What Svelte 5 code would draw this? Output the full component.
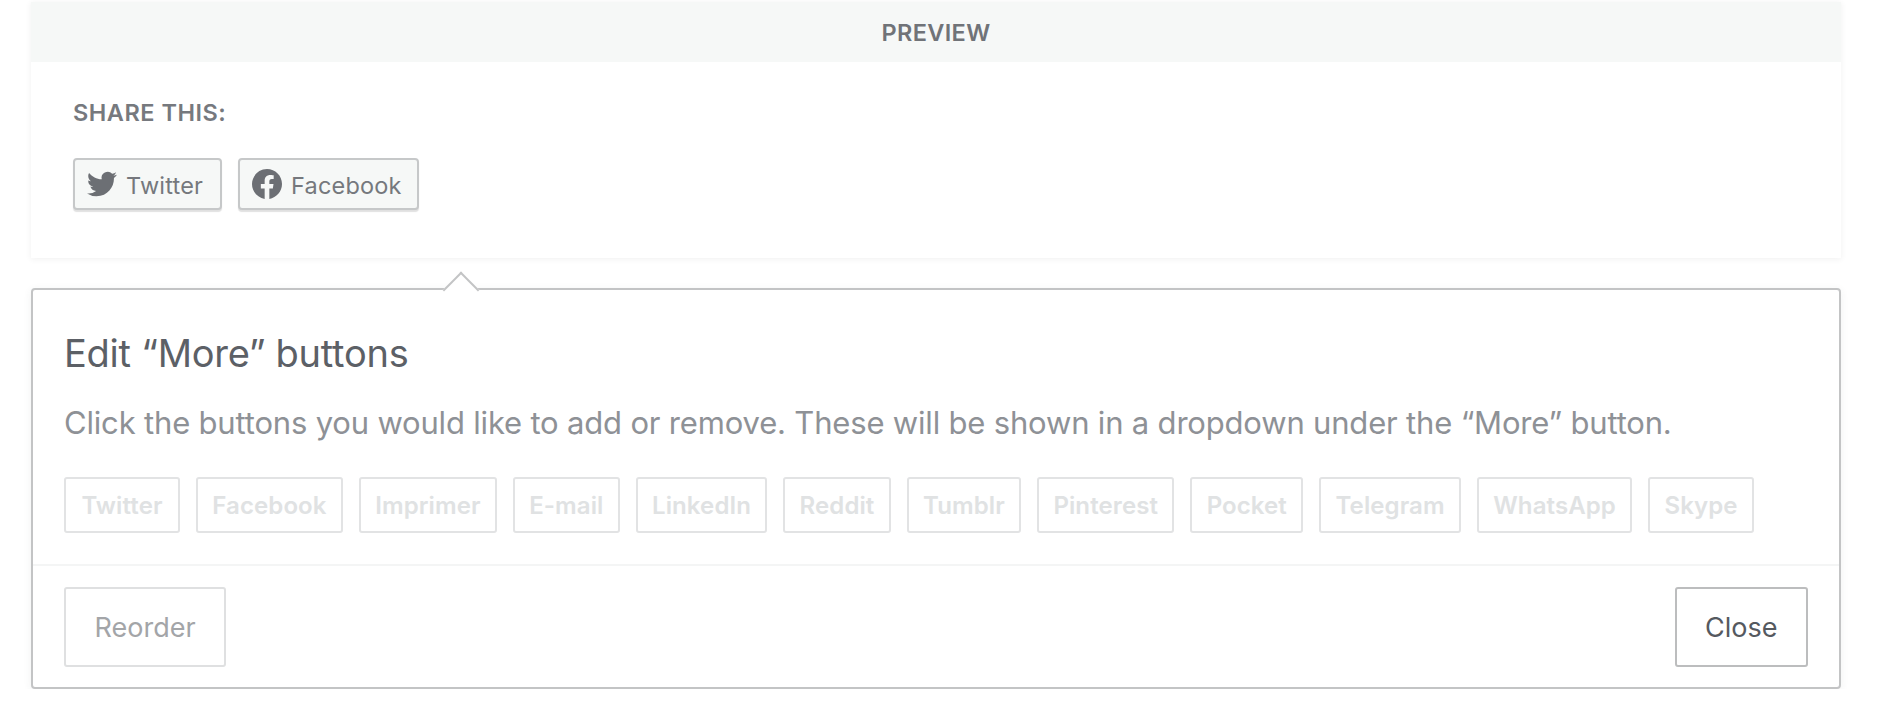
<script>
    const chips = [
        "Twitter",
        "Facebook",
        "Imprimer",
        "E-mail",
        "LinkedIn",
        "Reddit",
        "Tumblr",
        "Pinterest",
        "Pocket",
        "Telegram",
        "WhatsApp",
        "Skype",
    ];
</script>

<div class="page">
    <section class="preview">
        <h2 class="preview-title">PREVIEW</h2>
        <div class="preview-body">
            <h3 class="share-title">SHARE THIS:</h3>
            <div class="share-row">
                <button class="share-btn">
                    <svg viewBox="0 0 24 24" width="30" height="30" aria-hidden="true">
                        <path d="M23.953 4.57a10 10 0 01-2.825.775 4.958 4.958 0 002.163-2.723c-.951.555-2.005.959-3.127 1.184a4.92 4.92 0 00-8.384 4.482C7.69 8.095 4.067 6.13 1.64 3.162a4.822 4.822 0 00-.666 2.475c0 1.71.87 3.213 2.188 4.096a4.904 4.904 0 01-2.228-.616v.06a4.923 4.923 0 003.946 4.827 4.996 4.996 0 01-2.212.085 4.936 4.936 0 004.604 3.417 9.867 9.867 0 01-6.102 2.105c-.39 0-.779-.023-1.17-.067a13.995 13.995 0 007.557 2.209c9.053 0 13.998-7.496 13.998-13.985 0-.21 0-.42-.015-.63A9.935 9.935 0 0024 4.59z" />
                    </svg>
                    <span class="share-label">Twitter</span>
                </button>
                <button class="share-btn">
                    <svg viewBox="0 0 24 24" width="30" height="30" aria-hidden="true">
                        <path d="M24 12.073c0-6.627-5.373-12-12-12s-12 5.373-12 12c0 5.99 4.388 10.954 10.125 11.854v-8.385H7.078v-3.47h3.047V9.43c0-3.007 1.792-4.669 4.533-4.669 1.312 0 2.686.235 2.686.235v2.953H15.83c-1.491 0-1.956.925-1.956 1.874v2.25h3.328l-.532 3.47h-2.796v8.385C19.612 23.027 24 18.062 24 12.073z" />
                    </svg>
                    <span class="share-label">Facebook</span>
                </button>
            </div>
        </div>
    </section>

    <section class="editor">
        <span class="arrow"></span>
        <div class="editor-body">
            <h3 class="editor-title">Edit “More” buttons</h3>
            <p class="editor-text">Click the buttons you would like to add or remove. These will be shown in a dropdown under the “More” button.</p>
            <div class="chips">
                {#each chips as chip}
                    <button class="chip">{chip}</button>
                {/each}
            </div>
        </div>
        <div class="editor-footer">
            <button class="foot-btn muted">Reorder</button>
            <button class="foot-btn">Close</button>
        </div>
    </section>
</div>

<style>
    :global(body) {
        background: #fff;
        font-family: Inter, "Noto Sans", sans-serif;
    }
    .page {
        padding: 2px 45px 0 31px;
    }
    button {
        font-family: inherit;
        background: #fff;
        cursor: pointer;
    }
    .preview {
        box-shadow: 0 1px 6px rgba(60, 70, 70, 0.08);
    }
    .preview-title {
        margin: 0;
        height: 60px;
        line-height: 62px;
        background: #f6f8f7;
        text-align: center;
        font-size: 23.5px;
        font-weight: 600;
        letter-spacing: 0.35px;
        color: #707378;
    }
    .preview-body {
        height: 196px;
        box-sizing: border-box;
        padding: 37px 42px 0;
        background: #fff;
    }
    .share-title {
        margin: 0;
        font-size: 23.5px;
        line-height: 28px;
        font-weight: 600;
        letter-spacing: 0.5px;
        color: #76797e;
    }
    .share-row {
        display: flex;
        gap: 16px;
        margin-top: 31px;
    }
    .share-btn {
        display: flex;
        align-items: center;
        gap: 9px;
        height: 52px;
        min-width: 149px;
        box-sizing: border-box;
        padding: 0 15px 0 12px;
        background: #f6f8f7;
        border: 2px solid #c6c8c9;
        border-radius: 4px;
        box-shadow: 0 2px 1px rgba(0, 0, 0, 0.12);
        font-size: 23.5px;
        letter-spacing: 0.2px;
        color: #75787d;
    }
    .share-label {
        margin-top: 2px;
    }
    .share-btn svg {
        fill: #6c6f74;
        flex: none;
    }
    .editor {
        position: relative;
        margin-top: 30px;
        background: #fff;
        border: 2px solid #c3c4c5;
        border-radius: 4px;
        box-shadow: 0 2px 8px rgba(60, 70, 70, 0.07);
    }
    .arrow {
        position: absolute;
        top: -13px;
        left: 415px;
        width: 24px;
        height: 24px;
        background: #fff;
        border-top: 2px solid #c3c4c5;
        border-left: 2px solid #c3c4c5;
        transform: rotate(45deg);
    }
    .editor-body {
        padding: 38px 31px 31px;
        border-bottom: 2px solid #f4f5f5;
    }
    .editor-title {
        margin: 0;
        font-size: 38px;
        line-height: 50px;
        font-weight: 400;
        letter-spacing: -0.25px;
        color: #5c6066;
    }
    .editor-text {
        margin: 25px 0 0;
        font-size: 31px;
        line-height: 40px;
        letter-spacing: -0.18px;
        color: #8e9196;
    }
    .chips {
        display: flex;
        gap: 16px;
        margin-top: 34px;
    }
    .chip {
        height: 56px;
        box-sizing: border-box;
        padding: 0 14.3px;
        border: 2px solid #e2e3e4;
        border-radius: 3px;
        font-size: 24px;
        font-weight: 600;
        letter-spacing: 0.1px;
        color: #e0e2e3;
    }
    .chip:first-child {
        min-width: 116px;
    }
    .editor-footer {
        display: flex;
        justify-content: space-between;
        padding: 21px 31px 20px;
    }
    .foot-btn {
        height: 80px;
        box-sizing: border-box;
        padding: 1px 28.5px 0;
        border: 2px solid #bcbdbe;
        border-radius: 3px;
        font-size: 27px;
        color: #55595f;
    }
    .foot-btn.muted {
        border-color: #dfe0e1;
        color: #a3a5a8;
    }
</style>
